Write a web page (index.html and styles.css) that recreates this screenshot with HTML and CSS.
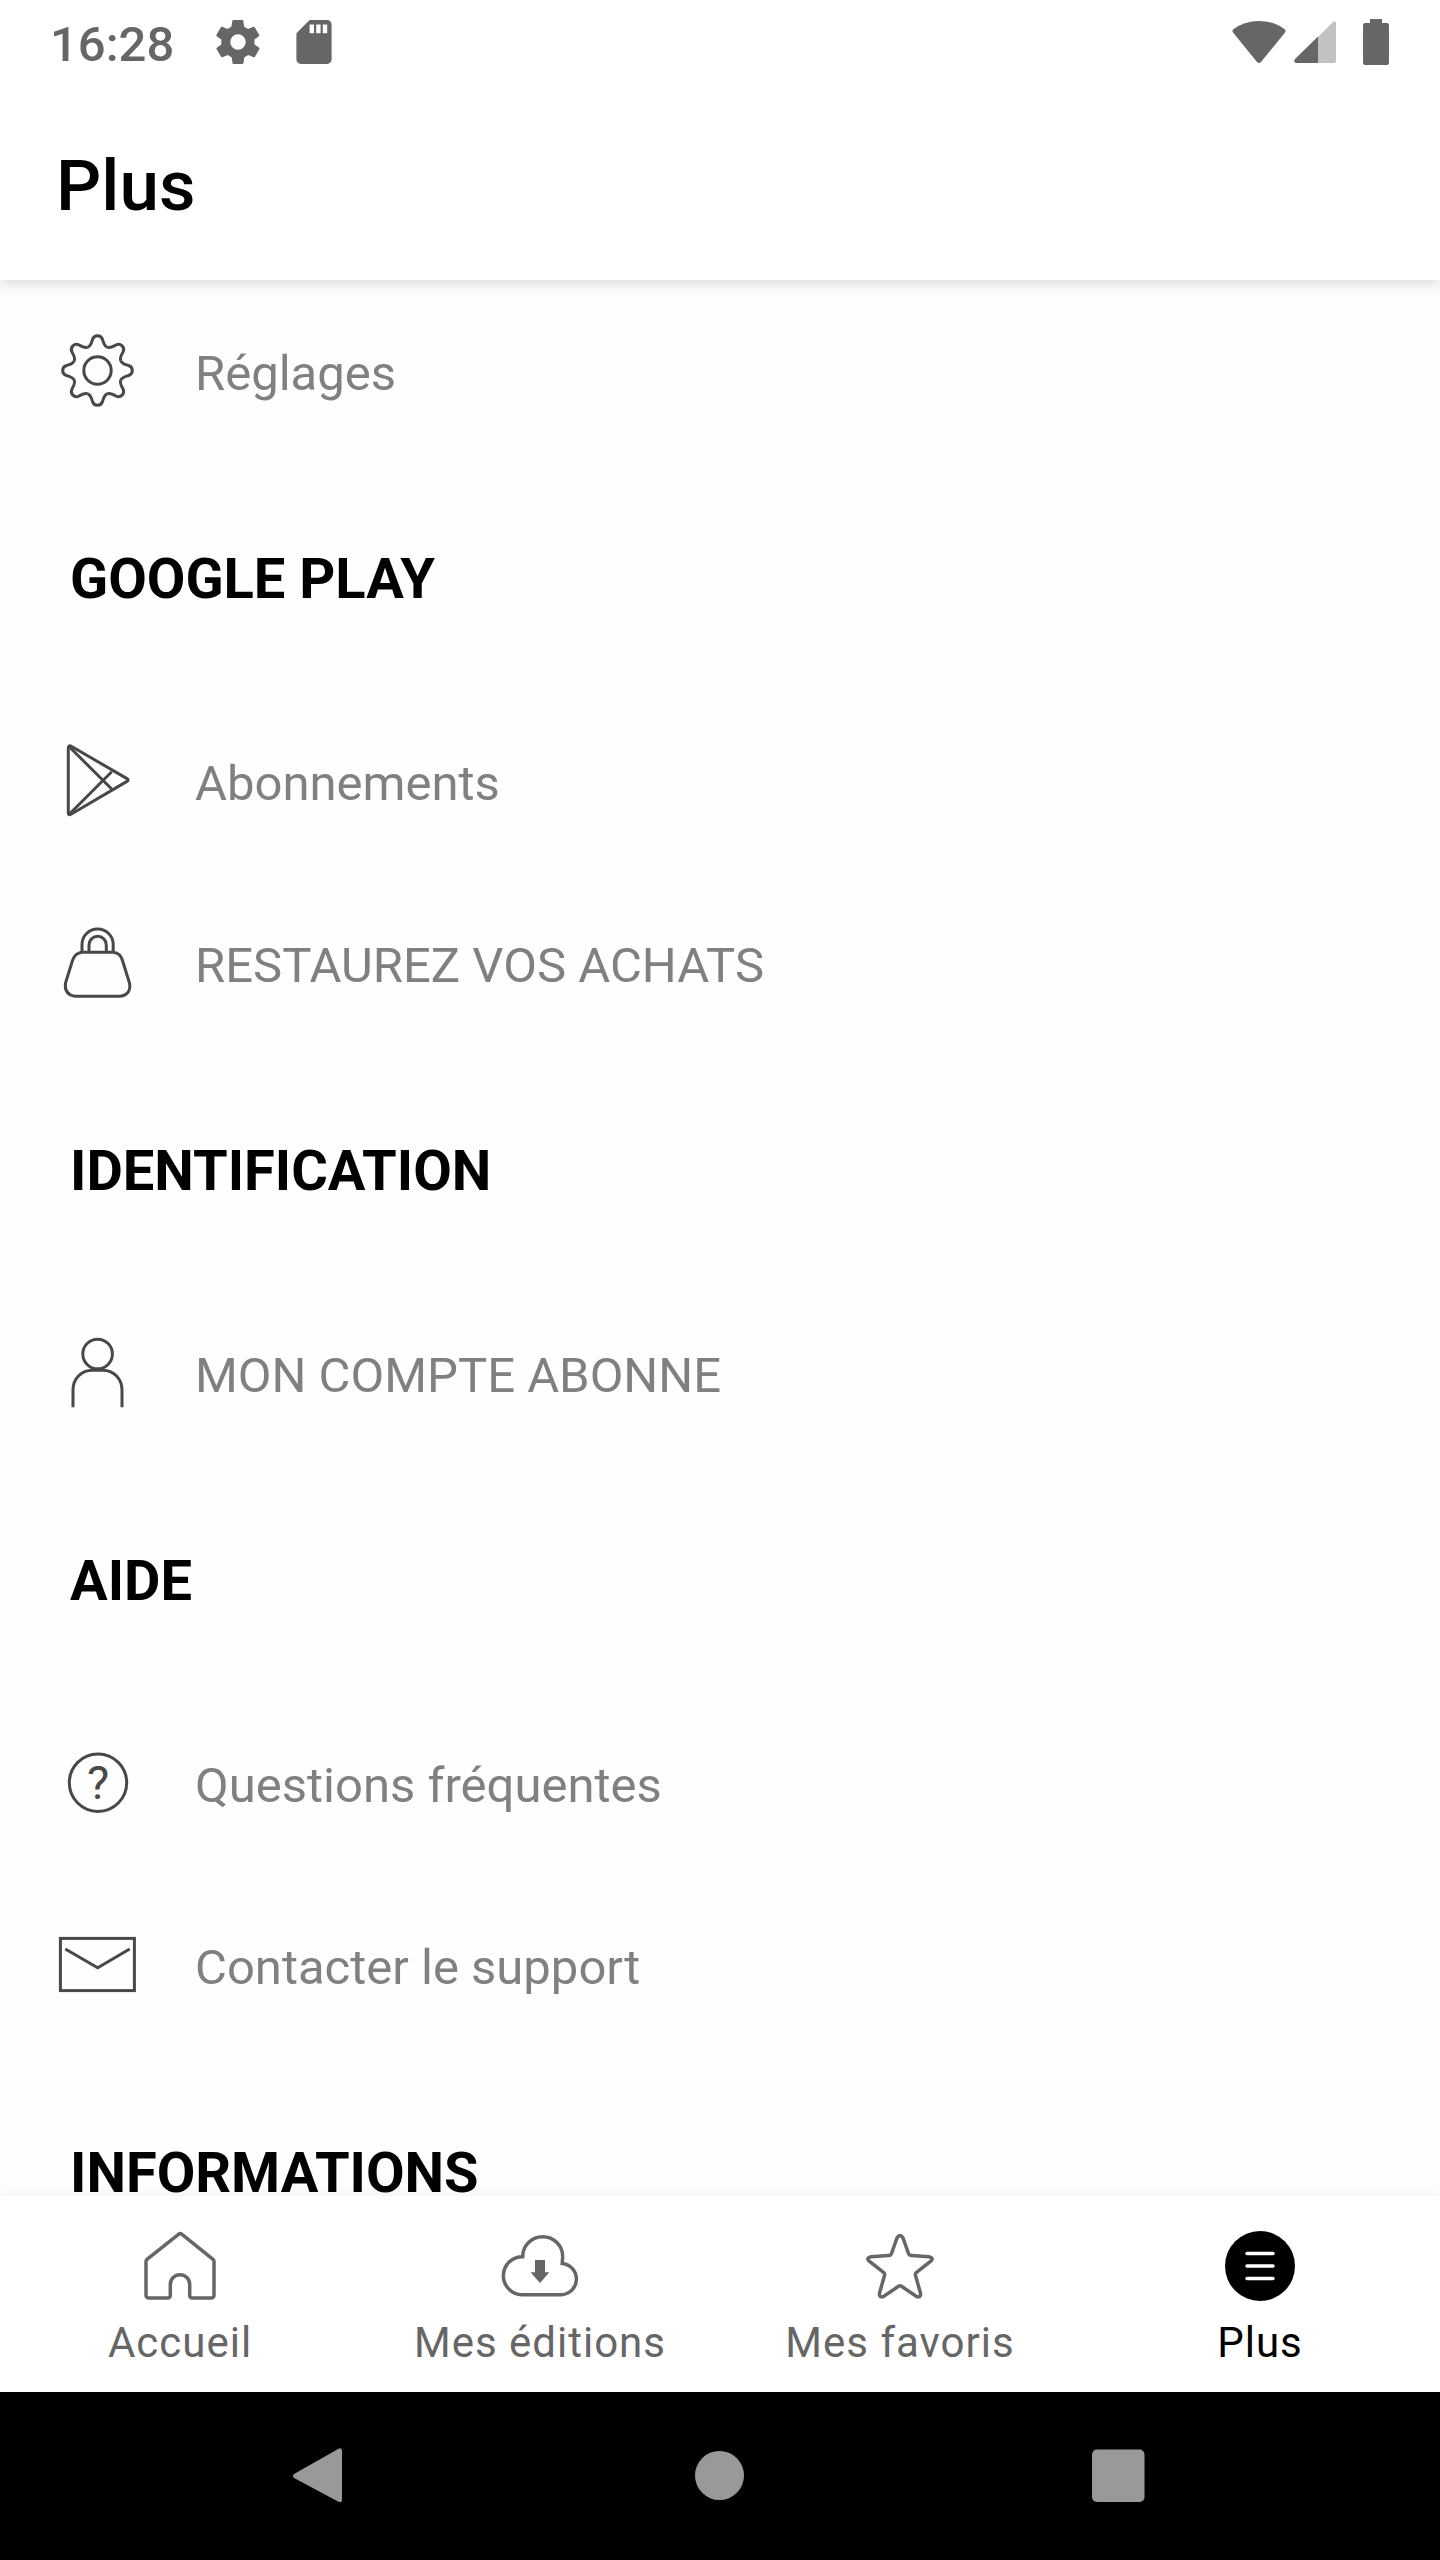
FILE: index.html
```html
<!DOCTYPE html>
<html lang="fr">
<head>
    <meta charset="UTF-8">
    <meta name="viewport" content="width=device-width, initial-scale=1.0">
    <title>Plus</title>
    <link rel="stylesheet" href="styles.css">
</head>
<body>
    <!-- Status bar -->
    <div class="status-bar">
        <span class="clock">16:28</span>
        <svg class="status-gear" viewBox="2 2 20 20"><path d="M19.4 13c.1-.3.1-.7.1-1s0-.7-.1-1l2.1-1.6c.2-.2.3-.4.1-.7l-2-3.4c-.1-.2-.4-.3-.6-.2l-2.5 1c-.5-.4-1.1-.7-1.7-1l-.4-2.6c0-.3-.2-.5-.5-.5h-4c-.2 0-.4.2-.5.4L9 5.1c-.6.2-1.1.6-1.7 1l-2.5-1c-.2-.1-.5 0-.6.2l-2 3.4c-.1.3 0 .5.1.7L4.5 11c0 .3-.1.7-.1 1s0 .7.1 1l-2.1 1.6c-.2.2-.3.4-.1.7l2 3.4c.1.2.4.3.6.2l2.5-1c.5.4 1.1.7 1.7 1l.4 2.6c0 .3.2.5.5.5h4c.2 0 .4-.2.5-.4l.4-2.7c.6-.2 1.1-.6 1.7-1l2.5 1c.2.1.5 0 .6-.2l2-3.4c.1-.2.1-.5-.1-.7L19.4 13zM12 15.5a3.5 3.5 0 1 1 0-7 3.5 3.5 0 0 1 0 7z"/></svg>
        <svg class="status-sd" viewBox="4 2 16 20"><path d="M18 2h-8L4 8v12c0 1.1.9 2 2 2h12c1.100 0 2-.9 2-2V4c0-1.100-.9-2-2-2zm-6 6h-2V4h2v4zm3 0h-2V4h2v4zm3 0h-2V4h2v4z"/></svg>
        <svg class="status-wifi" viewBox="0 0 54 44"><path d="M1 9.500Q12 1 27 1t26 8.500Q54 11 53 12.500L29 42q-2 2-4 0L1 12.500Q0 11 1 9.500z"/></svg>
        <svg class="status-signal" viewBox="0 0 42 42"><path class="faded" d="M24 16 39 1q3-2 3 1v38q0 2-2 2H24z"/><path d="M24 15.500V42H2q-3-1-1-4z"/></svg>
        <svg class="status-battery" viewBox="0 0 26 46"><path d="M7 0h12v4h5q2 0 2 2v38q0 2-2 2H2q-2 0-2-2V6q0-2 2-2h5z"/></svg>
    </div>

    <header class="app-header">
        <h1>Plus</h1>
    </header>

    <main class="menu">
        <a class="menu-item" href="#reglages">
            <svg class="menu-icon" viewBox="0 0 84 84">
                <defs>
                    <path id="tooth" d="M-9.65-23.3C-6.6-24.6-6-27.8-5-31C-4.3-33.4-2.6-34.8 0-34.8S4.3-33.4 5-31C6-27.8 6.6-24.6 9.65-23.3"/>
                </defs>
                <g transform="translate(41.5 41.5)">
                    <use href="#tooth"/>
                    <use href="#tooth" transform="rotate(45)"/>
                    <use href="#tooth" transform="rotate(90)"/>
                    <use href="#tooth" transform="rotate(135)"/>
                    <use href="#tooth" transform="rotate(180)"/>
                    <use href="#tooth" transform="rotate(225)"/>
                    <use href="#tooth" transform="rotate(270)"/>
                    <use href="#tooth" transform="rotate(315)"/>
                    <circle r="13.7"/>
                </g>
            </svg>
            <span>Réglages</span>
        </a>

        <h2>GOOGLE PLAY</h2>
        <a class="menu-item" href="#abonnements">
            <svg class="menu-icon" viewBox="0 0 84 84">
                <path d="M15.2 7.2 71 39.6Q73.2 41 71 42.4L15 75.2Q12.3 76.5 12.3 74V9Q12.3 6 15.2 7.2z"/>
                <path d="M13.5 8 55.7 50M13.5 75 55.7 32.7"/>
            </svg>
            <span>Abonnements</span>
        </a>
        <a class="menu-item" href="#achats">
            <svg class="menu-icon" viewBox="0 0 84 84">
                <path d="M26 31.3H57.3Q64.5 32 66.5 39.5L73.5 62Q75.5 73.5 64 75.3H19Q8 73.5 9.5 62L16.5 39.5Q19 32 26 31.3z"/>
                <path d="M26 31V23.5a15.6 15.6 0 0 1 31.2 0V31M33 31V24a8.6 8.6 0 0 1 17.3 0V31"/>
            </svg>
            <span>RESTAUREZ VOS ACHATS</span>
        </a>

        <h2>IDENTIFICATION</h2>
        <a class="menu-item" href="#compte">
            <svg class="menu-icon" viewBox="0 0 84 84">
                <circle cx="41.6" cy="23" r="14.8"/>
                <path d="M17 76.3V59C17 48 25 39.2 36.5 39.2H46.5C58 39.2 66 48 66 59V76.3"/>
            </svg>
            <span>MON COMPTE ABONNE</span>
        </a>

        <h2>AIDE</h2>
        <a class="menu-item" href="#questions">
            <svg class="menu-icon" viewBox="0 0 84 84">
                <circle cx="42" cy="41.7" r="28.7"/>
                <text class="question" x="42" y="58">?</text>
            </svg>
            <span>Questions fréquentes</span>
        </a>
        <a class="menu-item" href="#support">
            <svg class="menu-icon" viewBox="0 0 84 84">
                <rect x="4.4" y="15.4" width="74" height="52.2"/>
                <path d="M9.3 26 41.7 44.7 73.7 26"/>
            </svg>
            <span>Contacter le support</span>
        </a>

        <h2>INFORMATIONS</h2>
    </main>

    <!-- Bottom tabs -->
    <nav class="tabs">
        <a class="tab" href="#accueil">
            <svg class="tab-icon" viewBox="0 0 84 84"><path d="M40.5 10.3Q42.2 9 44 10.3L75 35.3Q76 36.2 76 37.5V71Q76 74 73 74H54.5Q51.7 74 51.7 71V60.4A9.7 9.7 0 0 0 32.3 60.4V71Q32.3 74 29.5 74H11Q8 74 8 71V37.5Q8 36.2 9 35.3z"/></svg>
            <span>Accueil</span>
        </a>
        <a class="tab" href="#editions">
            <svg class="tab-icon" viewBox="0 0 84 84">
                <path d="M24 70.7A19 19 0 0 1 24.7 32.7A20 20 0 0 1 64.7 32.7L64.2 39.4A15.7 15.7 0 0 1 63.7 70.7z"/>
                <path class="arrow" d="M37 36H47V48.3H51.4L42 59 32.6 48.3H37z"/>
            </svg>
            <span>Mes éditions</span>
        </a>
        <a class="tab" href="#favoris">
            <svg class="tab-icon" viewBox="0 0 84 84"><path d="M39 14Q42 9 45 14L50.5 29.5Q51.2 31.5 53.5 31.6L71 32.7Q76.5 34 72.5 37.5L58.5 48.3Q57 49.5 57.5 51.5L62.6 69.5Q63 74 58.5 72.5L43.5 62.3Q42 61.3 40.5 62.3L25.5 72.5Q21 74 21.4 69.5L26.5 51.5Q27 49.5 25.5 48.3L11.5 37.5Q7.5 34 13 32.7L30.5 31.6Q32.8 31.5 33.5 29.5z"/></svg>
            <span>Mes favoris</span>
        </a>
        <a class="tab active" href="#plus" aria-current="page">
            <svg class="tab-icon" viewBox="0 0 84 84">
                <circle class="disc" cx="42" cy="42" r="35"/>
                <path class="lines" d="M29 29.5H55M29 42H55M29 54.5H55"/>
            </svg>
            <span>Plus</span>
        </a>
    </nav>

    <!-- Android system buttons -->
    <div class="system-bar">
        <button type="button" aria-label="Retour"><svg viewBox="0 0 60 60"><path d="M4 28 49 2.5Q52 1.5 52 5V53Q52 58 48 55.5L4 32Q2 30 4 28z"/></svg></button>
        <button type="button" aria-label="Écran d'accueil"><svg viewBox="0 0 60 60"><circle cx="29.5" cy="29.5" r="24.5"/></svg></button>
        <button type="button" aria-label="Applications récentes"><svg viewBox="0 0 60 60"><rect x="2" y="3.5" width="52.5" height="52.5" rx="5"/></svg></button>
    </div>
</body>
</html>
```
FILE: styles.css
```css
:root {
    --bg-color: #fefefe;
    --status-color: #666;
    --item-color: #808080;
    --icon-color: #484848;
    --tab-color: #666;
    --system-color: #999;
}

* {
    box-sizing: border-box;
}

body {
    margin: 0;
    height: 100vh;
    display: flex;
    flex-direction: column;
    font-family: Roboto, "Noto Sans", sans-serif;
    background-color: var(--bg-color);
    color: #000;
}

a {
    color: inherit;
    text-decoration: none;
}

/* Status bar */
.status-bar {
    display: flex;
    align-items: center;
    height: 84px;
    padding: 0 51px 0 50px;
    flex-shrink: 0;
    background-color: #fff;
    fill: var(--status-color);
}

.clock {
    margin-right: 42px;
    padding-top: 4px;
    font-size: 49px;
    font-weight: 500;
    color: var(--status-color);
}

.status-gear {
    width: 44px;
    height: 44px;
    margin-right: 36px;
}

.status-sd {
    width: 36px;
    height: 44px;
}

.status-wifi {
    width: 54px;
    height: 44px;
    margin-left: auto;
    margin-right: 8px;
}

.status-signal {
    width: 42px;
    height: 42px;
    margin-right: 27px;
}

.status-signal .faded {
    fill: #c2c2c2;
}

.status-battery {
    width: 26px;
    height: 46px;
}

/* Title */
.app-header {
    display: flex;
    align-items: center;
    height: 196px;
    padding: 6px 56px 0;
    flex-shrink: 0;
    position: relative;
    z-index: 1;
    background-color: #fff;
    box-shadow: 0 3px 14px rgba(0, 0, 0, 0.16);
    clip-path: inset(0 0 -24px 0);
}

h1 {
    margin: 0;
    font-size: 71px;
    font-weight: 500;
}

/* Menu list */
.menu {
    flex: 1;
    min-height: 0;
    overflow-y: auto;
    scrollbar-width: none;
}

.menu-item {
    display: flex;
    align-items: center;
    gap: 55px;
    height: 182px;
    padding: 0 56px;
    font-size: 49px;
    color: var(--item-color);
}

.menu-item span {
    padding-top: 4px;
}

.menu-icon {
    width: 84px;
    height: 84px;
    flex-shrink: 0;
    fill: none;
    stroke: var(--icon-color);
    stroke-width: 3;
}

.menu-icon .question {
    font-size: 47px;
    text-anchor: middle;
    fill: var(--icon-color);
    stroke: none;
}

h2 {
    display: flex;
    align-items: center;
    height: 228px;
    margin: 0;
    padding: 6px 70px 0;
    font-size: 56px;
    font-weight: 700;
}

/* Bottom tabs */
.tabs {
    display: flex;
    flex-shrink: 0;
    position: relative;
    z-index: 1;
    background-color: #fff;
    box-shadow: 0 0 14px rgba(0, 0, 0, 0.07);
}

.tab {
    flex: 1;
    display: flex;
    flex-direction: column;
    align-items: center;
    gap: 10px;
    padding: 28px 0 24px;
    font-size: 42px;
    line-height: 50px;
    letter-spacing: 1px;
    color: var(--tab-color);
}

.tab.active {
    color: #000;
}

.tab-icon {
    width: 84px;
    height: 84px;
    fill: none;
    stroke: currentColor;
    stroke-width: 3.5;
}

.tab-icon .arrow,
.tab-icon .disc {
    fill: currentColor;
    stroke: none;
}

.tab-icon .lines {
    stroke: #fff;
    stroke-linecap: round;
}

/* System buttons */
.system-bar {
    display: flex;
    height: 168px;
    padding: 0 120px;
    flex-shrink: 0;
    position: relative;
    z-index: 2;
    background-color: #000;
}

.system-bar button {
    flex: 1;
    display: flex;
    align-items: center;
    justify-content: center;
    padding: 0;
    border: none;
    background: none;
    cursor: pointer;
}

.system-bar svg {
    width: 60px;
    height: 60px;
    fill: var(--system-color);
}
```
